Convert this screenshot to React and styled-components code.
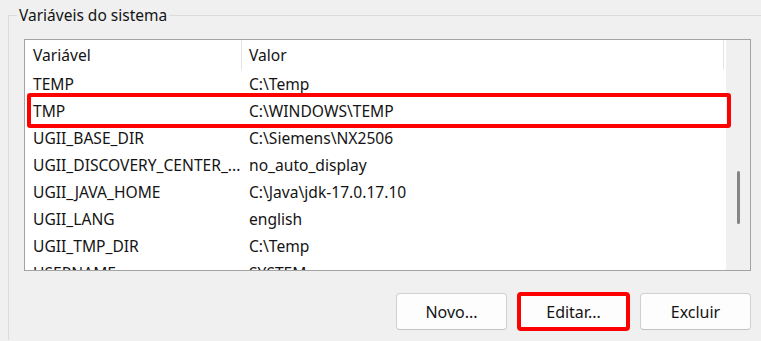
import React from "react";
import styled, { createGlobalStyle } from "styled-components";

const Global = createGlobalStyle`
  html, body { margin: 0; padding: 0; background: #f0f0f0; overflow: hidden; }
  body { font-family: "Noto Sans", "Open Sans", sans-serif; color: #141414; }
  #root { width: 761px; height: 341px; }
`;

const Group = styled.section`
  position: relative;
  margin: 15px 0 0 8px;
  border-top: 1px solid #dcdcdc;
  border-left: 1px solid #dcdcdc;
  padding: 23px 0 0 15px;
  height: 325px;
  box-sizing: border-box;
`;

const Legend = styled.div`
  position: absolute;
  top: -11px;
  left: 8px;
  padding: 0 2px;
  background: #f0f0f0;
  font-size: 15.5px;
  line-height: 20px;
  color: #141414;
`;

const ListBox = styled.div`
  position: relative;
  width: 727px;
  height: 232px;
  box-sizing: border-box;
  border: 1px solid #a3a3a3;
  background: #fff;
  display: flex;
`;

const Table = styled.div`
  flex: 1;
  overflow: hidden;
  display: flex;
  flex-direction: column;
`;

const Row = styled.div`
  display: grid;
  grid-template-columns: 217px 482px;
  height: ${(p) => (p.$header ? 30 : 27)}px;
  flex: none;
  align-items: center;
  font-size: 15.6px;
  white-space: nowrap;
`;

const Cell = styled.div`
  height: 100%;
  display: flex;
  align-items: center;
  padding-left: ${(p) => (p.$second ? 7 : 8)}px;
  border-right: ${(p) => (p.$header ? "1px solid #e5e5e5" : "none")};
  overflow: hidden;
`;

const ScrollBar = styled.div`
  width: 24px;
  flex: none;
  background: #f0f0f0;
  display: flex;
  justify-content: center;
`;

const Thumb = styled.div`
  width: 3px;
  height: 53px;
  margin-top: 131px;
  border-radius: 2px;
  background: #858585;
`;

const Highlight = styled.div`
  position: absolute;
  left: 2px;
  top: 53px;
  width: 704px;
  height: 35px;
  box-sizing: border-box;
  border: 4px solid #ff0000;
  border-radius: 3px;
  pointer-events: none;
`;

const Buttons = styled.div`
  display: flex;
  justify-content: flex-end;
  gap: 11px;
  width: 727px;
  margin-top: 22px;
`;

const Button = styled.button`
  width: 111px;
  height: 37px;
  box-sizing: border-box;
  border: 1px solid #d0d0d0;
  border-bottom-color: #c2c2c2;
  border-radius: 4px;
  background: #fdfdfd;
  font-family: inherit;
  font-size: 16px;
  color: #141414;
  padding: 0;
  ${(p) =>
    p.$marked
      ? "outline: 4px solid #ff0000; outline-offset: -3px; border-radius: 3px;"
      : ""}
`;

const rows = [
  ["TEMP", "C:\\Temp"],
  ["TMP", "C:\\WINDOWS\\TEMP"],
  ["UGII_BASE_DIR", "C:\\Siemens\\NX2506"],
  ["UGII_DISCOVERY_CENTER_...", "no_auto_display"],
  ["UGII_JAVA_HOME", "C:\\Java\\jdk-17.0.17.10"],
  ["UGII_LANG", "english"],
  ["UGII_TMP_DIR", "C:\\Temp"],
  ["USERNAME", "SYSTEM"],
];

export default function App() {
  return (
    <>
      <Global />
      <Group>
        <Legend>Variáveis do sistema</Legend>
        <ListBox>
          <Table>
            <Row $header>
              <Cell $header>Variável</Cell>
              <Cell $header $second>Valor</Cell>
            </Row>
            {rows.map(([k, v]) => (
              <Row key={k}>
                <Cell>{k}</Cell>
                <Cell $second>{v}</Cell>
              </Row>
            ))}
          </Table>
          <ScrollBar>
            <Thumb />
          </ScrollBar>
          <Highlight />
        </ListBox>
        <Buttons>
          <Button>Novo...</Button>
          <Button $marked>Editar...</Button>
          <Button>Excluir</Button>
        </Buttons>
      </Group>
    </>
  );
}
